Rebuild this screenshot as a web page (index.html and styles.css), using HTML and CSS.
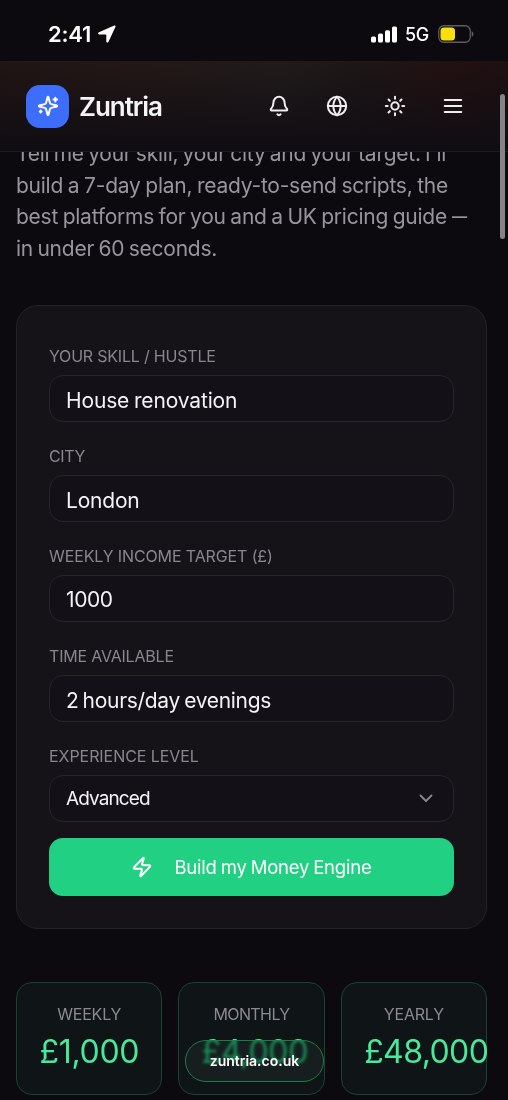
FILE: index.html
```html
<!DOCTYPE html>
<html lang="en">
<head>
<meta charset="utf-8">
<title>Zuntria</title>
<link rel="stylesheet" href="styles.css">
</head>
<body>
<div class="screen">
  <div class="top">
    <div class="status">
      <div class="status-left">
        <span class="clock">2:41</span>
        <svg class="arrow" width="18" height="18" viewBox="0 0 18 18"><path d="M16.2 .5 1 7.3C-.3 8-.1 9.400 1.300 9.400h6.500c.3 0 .5.200.5.500v6.300c0 1.600 1.600 1.900 2.200.5L17.500 1.800C17.900.8 17.200.100 16.200.500Z" fill="#fff"/></svg>
      </div>
      <div class="status-right">
        <svg width="26" height="17" viewBox="0 0 26 17" fill="#fff"><rect x="0" y="10.500" width="5" height="6" rx="1.500"/><rect x="7" y="7.500" width="5" height="9" rx="1.500"/><rect x="14" y="4.300" width="5" height="12.200" rx="1.500"/><rect x="21" y=".5" width="5" height="16" rx="1.500"/></svg>
        <span class="net">5G</span>
        <svg class="battery" width="36" height="18" viewBox="0 0 36 18"><rect x=".75" y=".75" width="31.500" height="16.500" rx="5" fill="none" stroke="#5d5c61" stroke-width="1.300"/><rect x="2.500" y="2.500" width="14.500" height="13" rx="3.500" fill="#fbdf0c"/><path d="M33.700 6.200c2.300.8 2.300 4.800 0 5.600z" fill="#5d5c61"/></svg>
      </div>
    </div>
    <header class="header">
      <div class="brand">
        <span class="logo"><svg width="22" height="22" viewBox="0 0 24 24"><path d="M9.937 15.500A2 2 0 0 0 8.500 14.063l-6.135-1.582a.5.500 0 0 1 0-.962L8.500 9.936A2 2 0 0 0 9.937 8.500l1.582-6.135a.5.500 0 0 1 .963 0L14.063 8.500A2 2 0 0 0 15.500 9.937l6.135 1.581a.5.500 0 0 1 0 .964L15.500 14.063a2 2 0 0 0-1.437 1.437l-1.582 6.135a.5.500 0 0 1-.963 0zM20 3v4M22 5h-4M4 17v2M5 18H3"/></svg></span>
        <span class="name">Zuntria</span>
      </div>
      <nav class="actions">
        <svg viewBox="0 0 24 24"><path d="M10.268 21a2 2 0 0 0 3.464 0M3.262 15.326A1 1 0 0 0 4 17h16a1 1 0 0 0 .74-1.673C19.410 13.956 18 12.499 18 8A6 6 0 0 0 6 8c0 4.499-1.411 5.956-2.738 7.326"/></svg>
        <svg viewBox="0 0 24 24"><circle cx="12" cy="12" r="10"/><path d="M12 2a14.500 14.500 0 0 0 0 20 14.500 14.500 0 0 0 0-20M2 12h20"/></svg>
        <svg viewBox="0 0 24 24"><circle cx="12" cy="12" r="4"/><path d="M12 2v2M12 20v2M4.930 4.930l1.410 1.410M17.660 17.660l1.410 1.410M2 12h2M20 12h2M6.340 17.660l-1.410 1.410M19.070 4.930l-1.410 1.410"/></svg>
        <svg viewBox="0 0 24 24"><path d="M3 5.500h18M3 12h18M3 18.500h18"/></svg>
      </nav>
    </header>
  </div>

  <main class="content">
    <p class="intro"><span class="l1">Tell me your skill, your city and your target. I'll</span><br><span class="l2">build a 7-day plan, ready-to-send scripts, the</span><br><span class="l3">best platforms for you and a UK pricing guide <span class="dash">—</span></span><br><span class="l4">in under 60 seconds.</span></p>

    <form class="card">
      <div class="field"><label class="f1">YOUR SKILL / HUSTLE</label><div class="input"><span class="v1">House renovation</span></div></div>
      <div class="field"><label class="f2">CITY</label><div class="input"><span class="v2">London</span></div></div>
      <div class="field"><label class="f3">WEEKLY INCOME TARGET (£)</label><div class="input number"><span class="v3">1000</span></div></div>
      <div class="field"><label class="f4">TIME AVAILABLE</label><div class="input"><span class="v4">2 hours/day evenings</span></div></div>
      <div class="field"><label class="f5">EXPERIENCE LEVEL</label><div class="input select"><span class="v5">Advanced</span><svg class="chevron" width="14" height="9" viewBox="0 0 14 9"><path d="M1.500 1.500 7 7l5.500-5.500"/></svg></div></div>
      <div class="button"><svg width="22" height="22" viewBox="0 0 24 24"><path d="M4 14a1 1 0 0 1-.78-1.630l9.900-10.200a.5.500 0 0 1 .86.460l-1.920 6.020A1 1 0 0 0 13 10h7a1 1 0 0 1 .78 1.630l-9.900 10.200a.5.500 0 0 1-.86-.460l1.920-6.020A1 1 0 0 0 11 14z"/></svg><span class="cta">Build my Money Engine</span></div>
    </form>

    <section class="stats">
      <div class="stat"><span class="stat-label">WEEKLY</span><span class="stat-value weekly">£1,000</span></div>
      <div class="stat"><span class="stat-label mid">MONTHLY</span><span class="stat-value monthly">£4,000</span></div>
      <div class="stat"><span class="stat-label">YEARLY</span><span class="stat-value yearly">£48,000</span></div>
    </section>
  </main>
  <div class="scrollbar"></div>
  <div class="address"><span>zuntria.co.uk</span></div>
</div>
</body>
</html>
```
FILE: styles.css
```css
* { box-sizing: border-box; }
body { margin: 0; background: #0d0a0f; font-family: Inter, sans-serif; color: #f4f3f6; }
.screen { position: relative; width: 508px; height: 1100px; overflow: hidden; }
svg { display: block; flex: none; }

/* Status bar and navigation float over the scrolled page */
.top { position: absolute; inset: 0 0 auto; z-index: 2; }
.status { height: 61px; padding: 7px 34px 0 48px; display: flex; align-items: center; justify-content: space-between; background: #0d0a0f; }
.status-left, .status-right { display: flex; align-items: center; }
.clock { font-size: 22px; font-weight: 600; letter-spacing: -.2px; color: #fff; }
.arrow { margin-left: 7px; }
.net { font-size: 18px; font-weight: 500; margin: 1px 9px 0 8px; letter-spacing: -.3px; color: #fff; }
.header { height: 91px; padding: 0 44px 0 26px; display: flex; align-items: center; justify-content: space-between; border-bottom: 1px solid #1e1b20; background: linear-gradient(180deg, transparent 0, #100d12 95%), linear-gradient(90deg, #211515 0, #231817 28%, #211b1c 55%, #1d1617 72%, #231112 88%, #1e1012 100%); }
.brand { display: flex; align-items: center; gap: 10px; }
.logo { width: 43px; height: 43px; border-radius: 14px; background: #3c6efb; display: grid; place-items: center; }
.logo svg, .actions svg, .button svg { fill: none; stroke: #fff; stroke-width: 2.200; stroke-linecap: round; stroke-linejoin: round; }
.name { font-size: 26px; font-weight: 600; letter-spacing: -1.050px; }
.actions { display: flex; gap: 36px; }
.actions svg { width: 22px; height: 22px; stroke: #efedf0; }

.content { padding: 138px 21px 0 16px; }
.intro { margin: 0; font-size: 21px; line-height: 31.5px; letter-spacing: -.25px; color: #99959f; white-space: nowrap; }
.l1 { word-spacing: -1.300px; }
.l2 { word-spacing: -.9px; }
.l3 { word-spacing: -1.050px; }
.l4 { word-spacing: -1.200px; }
.dash { display: inline-block; transform: scaleX(.72); transform-origin: 0 50%; }

.card { margin-top: 41px; height: 624px; padding: 40px 32px 32px; border: 1px solid #242127; border-radius: 22px; background: #151218; }
.field { margin-bottom: 24px; }
.field label { display: block; height: 20px; line-height: 20px; margin-bottom: 9px; font-size: 16px; color: #8a8690; white-space: nowrap; }
.f1, .f4 { letter-spacing: -.2px; }
.f2 { letter-spacing: -.4px; }
.f3 { letter-spacing: -.12px; }
.f5 { letter-spacing: -.06px; }
.input { height: 47px; padding: 3px 20px 0 16px; display: flex; align-items: center; justify-content: space-between; border: 1px solid #27242a; border-radius: 14px; background: #131017; font-size: 21px; letter-spacing: -.4px; }
.number { padding-top: 1px; }
.v1 { letter-spacing: -.150px; word-spacing: -1px; }
.v2 { letter-spacing: -.2px; }
.v4 { letter-spacing: -.3px; word-spacing: -1.500px; }
.select { padding-top: 0; font-size: 19px; letter-spacing: -.9px; }
.chevron { fill: none; stroke: #8b8790; stroke-width: 1.800; stroke-linecap: round; stroke-linejoin: round; }
.button { margin-top: -8px; height: 58px; display: flex; align-items: center; justify-content: center; gap: 21px; border-radius: 14px; background: #21d083; color: #fff; font-size: 18.500px; letter-spacing: -.2px; word-spacing: -1px; }

.stats { margin-top: 53px; display: grid; grid-template-columns: repeat(3, minmax(0, 1fr)); gap: 16px; }
.stat { height: 113px; padding: 19px 22.500px 0; border: 1.500px solid #174330; border-radius: 16px; background: #0f1416; white-space: nowrap; }
.stat-label { display: block; height: 24px; line-height: 24px; font-size: 16px; text-align: center; color: #8c8992; letter-spacing: -.2px; }
.mid { letter-spacing: -.6px; }
.stat-value { display: block; margin-top: 7px; line-height: 38px; font-size: 32px; letter-spacing: -.3px; color: #47e99a; }
.yearly { letter-spacing: -.6px; }

.scrollbar { position: absolute; z-index: 3; top: 94px; right: 3px; width: 5px; height: 145px; border-radius: 3px; background: #858388; }
.address { position: absolute; z-index: 3; left: 185px; top: 1040px; width: 139px; height: 42px; padding-bottom: 1px; border: 1.500px solid #188047; border-radius: 21px; display: grid; place-items: center; background: rgba(34, 39, 39, .5); backdrop-filter: blur(1.500px) saturate(1.500); color: #fff; font-size: 14px; font-weight: 600; }
```
